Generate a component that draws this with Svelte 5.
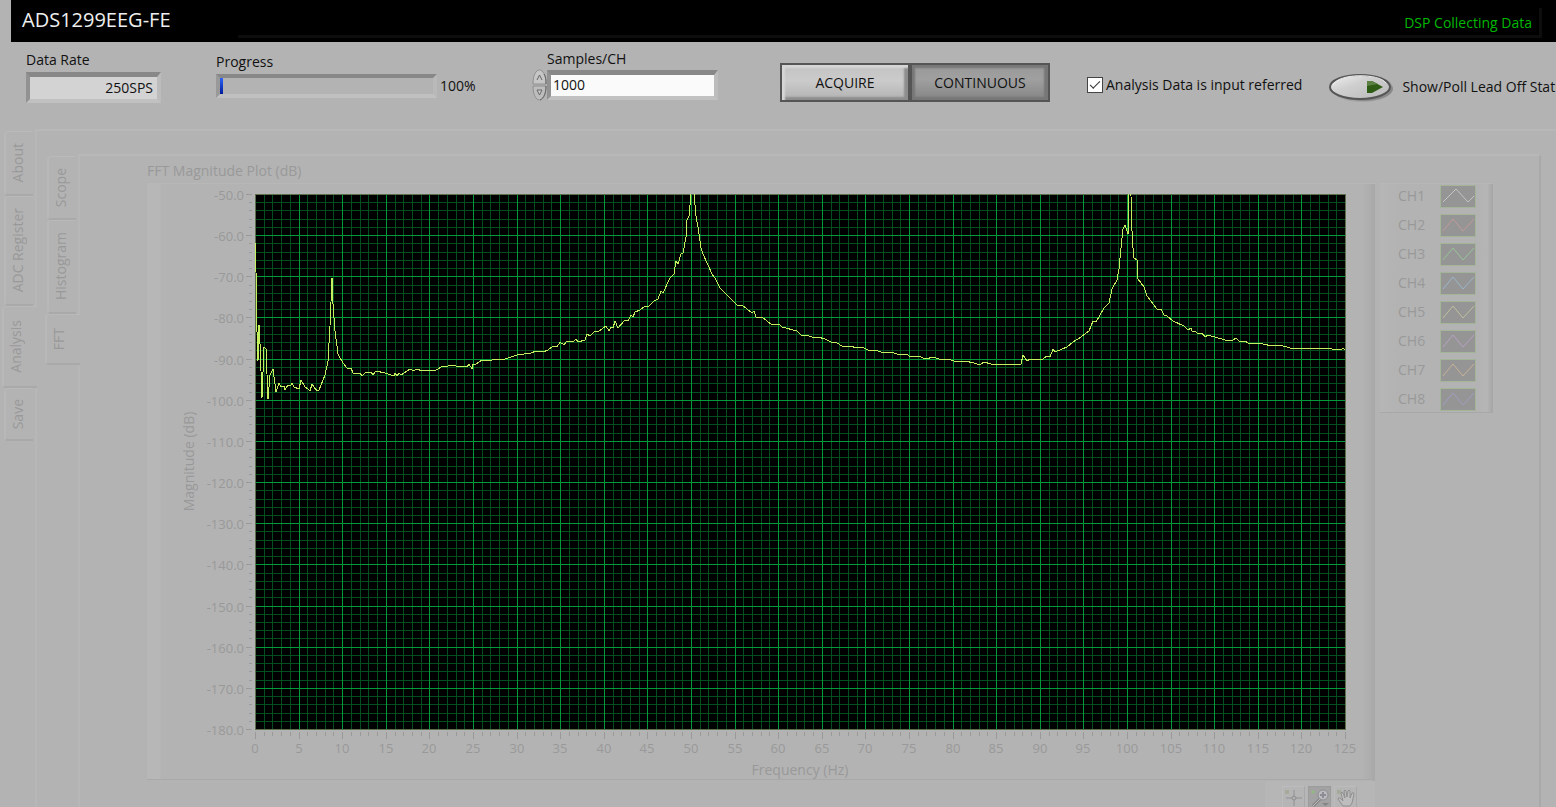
<script>
    const outerTabs = [
        { name: 'About', height: 65 },
        { name: 'ADC Register', height: 110 },
        { name: 'Analysis', height: 82, selected: true },
        { name: 'Save', height: 53 }
    ];
    const innerTabs = [
        { name: 'Scope', height: 64 },
        { name: 'Histogram', height: 94 },
        { name: 'FFT', height: 51, selected: true }
    ];
    const channels = [
        { name: 'CH1', color: '#c4c4c4' },
        { name: 'CH2', color: '#c49a9a' },
        { name: 'CH3', color: '#98c498' },
        { name: 'CH4', color: '#9bb6ca' },
        { name: 'CH5', color: '#c0c0a0' },
        { name: 'CH6', color: '#b9a0c4' },
        { name: 'CH7', color: '#c8b298' },
        { name: 'CH8', color: '#9e9ec4' }
    ];

    // [Hz, dB]
    const spectrum = [
        [0, -61.8], [0.1, -69], [0.2, -83.5], [0.3, -90.7], [0.42, -81.9], [0.57, -86.4], [0.76, -99.6], [1.03, -87.1],
        [1.3, -87.6], [1.49, -99.9], [1.72, -94.1], [2.03, -92.5], [2.45, -98.1], [2.75, -96], [3.02, -96.8], [3.3, -96.7],
        [3.48, -97.6], [3.82, -96.5], [4.1, -96.5], [4.28, -96], [4.51, -97], [5, -97.4], [5.31, -95.1], [5.73, -96.9],
        [6.1, -97.3], [6.31, -97.9], [6.5, -96.2], [6.8, -97], [7.07, -97.9], [7.38, -97.6], [8, -94.1], [8.37, -90.5],
        [8.56, -82], [8.79, -70.5], [8.98, -76.7], [9.21, -83.2], [9.56, -88.9], [10.13, -91], [10.5, -92.2], [11, -92.3],
        [11.28, -93.5], [12, -93.5], [12.23, -94.3], [12.6, -93.6], [13.3, -93.2], [13.5, -94], [13.9, -93.1], [14.9, -93.6],
        [15.9, -94.3], [16.1, -93.6], [16.3, -94.3], [16.5, -93.6], [16.8, -94], [17.8, -92.6], [18.2, -92.9], [18.5, -92.5],
        [19.3, -92.9], [20.8, -92.8], [21.6, -91.9], [22, -92.1], [22.3, -91.5], [23, -91.9], [23.9, -91.7], [24.3, -92],
        [24.5, -91.4], [24.85, -92.5], [25, -91.4], [25.4, -91.4], [26, -90.4], [26.8, -90.6], [27.5, -90.2], [28.3, -90.3],
        [29, -89.9], [30, -89.1], [30.8, -88.9], [31.6, -88.6], [32.2, -88.1], [33, -88.3], [33.6, -87.8], [34.2, -86.9],
        [34.6, -87.1], [35, -86], [35.4, -86.6], [35.8, -85.6], [36.5, -85.9], [36.8, -85.3], [37, -86], [37.9, -85.5],
        [38.1, -84], [38.4, -84.5], [39, -83.2], [39.3, -83.6], [40.3, -82.1], [40.6, -83.3], [40.8, -82.3], [41.1, -82.6],
        [41.3, -80.8], [41.6, -82.5], [42.4, -80.6], [42.8, -80.8], [43.1, -79.3], [43.3, -79.8], [43.6, -78.7], [44.2, -78.3],
        [44.7, -77.2], [45.1, -77.5], [45.7, -75.9], [46.2, -75.4], [46.6, -73.6], [46.8, -74], [47.6, -70.4], [48, -69.4],
        [48.3, -66.2], [48.5, -67], [48.8, -64.7], [49.1, -64.4], [49.4, -60.5], [49.5, -56.3], [49.8, -55.3], [49.95, -50],
        [50, -46], [50.3, -46], [50.4, -50], [50.6, -55.3], [50.8, -58.1], [51.2, -63], [51.4, -64.6], [52.4, -69.4],
        [52.8, -70.4], [53.3, -72.8], [53.7, -73.5], [54.4, -75.1], [55.3, -76.9], [55.8, -77], [57, -79], [57.2, -78.5],
        [57.5, -80], [58.1, -80], [59.3, -81.8], [60.1, -81.7], [60.4, -82.4], [62.1, -83.2], [62.7, -84.4], [63.3, -84.3],
        [64.1, -85.1], [64.6, -84.8], [65.4, -85.2], [66, -86], [66.8, -86.2], [67.3, -86.9], [68.2, -87], [69, -87.4],
        [69.6, -87.2], [70.3, -87.9], [71.2, -87.8], [72, -88.6], [73, -88.5], [73.8, -89.1], [74.6, -88.9], [75.2, -89.5],
        [76, -89.3], [77, -90], [77.8, -89.7], [78.8, -90.4], [79.6, -90.2], [80.4, -90.8], [81.4, -90.7], [82.4, -91],
        [83.1, -91.5], [83.6, -90.9], [84.4, -91.2], [85.2, -91.6], [85.8, -91.2], [86.6, -91.4], [87.2, -91.2], [87.8, -91.4],
        [88.1, -89.2], [88.5, -90.6], [88.9, -90.2], [90.4, -90], [90.8, -89.4], [91.2, -89.7], [91.5, -87.7], [91.7, -88.3],
        [93.1, -87.2], [93.8, -86], [94.4, -85.2], [95.6, -83.2], [96.1, -80.8], [96.5, -81.1], [97.4, -77.7], [97.9, -76.6],
        [98.3, -73.1], [98.8, -71], [99.05, -68.2], [99.3, -63], [99.5, -58.5], [99.8, -57.5], [100.1, -59.6], [100.15, -46],
        [100.4, -46], [100.5, -50.6], [100.6, -58.9], [100.7, -63], [100.85, -65.5], [101.1, -66], [101.3, -70.6], [102, -72.5],
        [102.3, -74.9], [103.4, -77.9], [103.9, -78], [104.2, -79.5], [104.6, -79.6], [105.3, -80.9], [106.5, -82], [107, -83],
        [107.3, -82.5], [107.5, -83.4], [107.8, -83.2], [108, -83.7], [108.6, -83.8], [109, -84.7], [109.3, -84.3], [111.2, -85.5],
        [112.2, -85.5], [112.5, -85.1], [112.9, -85.8], [113.5, -85.8], [113.9, -86.3], [115.6, -86.4], [116.6, -86.9], [117.5, -86.8],
        [118.7, -87.3], [123.3, -87.4], [123.5, -87.7], [124.6, -87.7], [124.8, -87.3], [125, -87.9]
    ];

    // Plot area inside of the graph svg
    const left = 108;
    const top = 10;
    const plotHeight = 535;
    const maxHz = 125;
    const maxDb = -50;
    const minDb = -180;

    let graphWidth = 1228;
    let sampleCount = '1000';
    let inputReferred = true;

    $: plotWidth = graphWidth - left - 30;
    $: xOf = hz => left + Math.round(hz * plotWidth / maxHz);
    const yOf = db => top + Math.round((maxDb - db) * plotHeight / (maxDb - minDb));

    $: trace = spectrum.map(([hz, db]) => `${xOf(hz)},${yOf(db)}`).join(' ');

    const hzTicks = Array.from({ length: maxHz + 1 }, (_, i) => i);
    const dbTicks = Array.from({ length: 66 }, (_, i) => maxDb - i * 2);

    function step(amount) {
        sampleCount = String(Math.max(0, Number(sampleCount) + amount));
    }
</script>

<div class="front-panel">
    <header class="title-bar">
        <h1>ADS1299EEG-FE</h1>
        <div class="status">DSP Collecting Data</div>
    </header>

    <section class="toolbar">
        <div class="field data-rate">
            <label for="data-rate">Data Rate</label>
            <input class="sunken" id="data-rate" type="text" value="250SPS" readonly />
        </div>
        <div class="field progress">
            <label for="progress">Progress</label>
            <div class="line">
                <progress id="progress" max="100" value="1"></progress>
                <span>100%</span>
            </div>
        </div>
        <div class="field samples">
            <label for="samples">Samples/CH</label>
            <div class="line">
                <div class="spinner">
                    <button aria-label="Increment" on:click={() => step(1)}>
                        <svg width="15" height="16" viewBox="0 0 15 16">
                            <path d="M1 15C1 6 4 1 7.500 1S14 6 14 15Z" fill="#c6c6c6" stroke="#909090" />
                            <path d="M12 5C14 8 14 11 14 15" fill="none" stroke="#666" />
                            <path d="M5 11L7.500 6L10 11" fill="none" stroke="#666" />
                        </svg>
                    </button>
                    <button aria-label="Decrement" on:click={() => step(-1)}>
                        <svg width="15" height="16" viewBox="0 0 15 16">
                            <path d="M1 1C1 10 4 15 7.500 15S14 10 14 1Z" fill="#bdbdbd" stroke="#909090" />
                            <path d="M14 1C14 8 12 13 8 15" fill="none" stroke="#666" />
                            <path d="M5 5H10L7.500 10Z" fill="#ccc" stroke="#666" />
                        </svg>
                    </button>
                </div>
                <input class="sunken" id="samples" type="text" bind:value={sampleCount} />
            </div>
        </div>
        <div class="modes">
            <button class="mode">ACQUIRE</button>
            <button class="mode pressed">CONTINUOUS</button>
        </div>
        <label class="referred">
            <input type="checkbox" bind:checked={inputReferred} />
            Analysis Data is input referred
        </label>
        <div class="lead-off">
            <button id="lead-off" aria-label="Show/Poll Lead Off Status">
                <svg width="66" height="32" viewBox="0 0 66 32">
                    <defs>
                        <linearGradient id="oval" x1="0" y1="0" x2="1" y2="1">
                            <stop offset="0" stop-color="#f2f2f2" />
                            <stop offset="0.4" stop-color="#cfcfcf" />
                            <stop offset="1" stop-color="#b8b8b8" />
                        </linearGradient>
                    </defs>
                    <ellipse cx="33" cy="17" rx="31" ry="14" fill="#a5a5a5" />
                    <ellipse cx="35" cy="18" rx="29" ry="12" fill="#8a8a8a" />
                    <ellipse cx="31" cy="16" rx="30" ry="12" fill="url(#oval)" stroke="#555" stroke-width="2" />
                    <path d="M4 14C9 2 50 2 57 12" fill="none" stroke="#f0f0f0" />
                    <path d="M38 10H43L54 16L43 22H38Z" fill="#2f5c14" />
                    <path d="M38 10H43L49 13L38 15Z" fill="#5a8044" />
                </svg>
            </button>
            <label for="lead-off">Show/Poll Lead Off Status</label>
        </div>
    </section>

    <main class="tab-control outer">
        <div class="tabs">
            {#each outerTabs as tab}
                <button class="tab" class:selected={tab.selected} style="height: {tab.height}px" disabled>
                    <span>{tab.name}</span>
                </button>
            {/each}
        </div>
        <div class="page">
            <div class="tab-control inner">
                <div class="tabs">
                    {#each innerTabs as tab}
                        <button class="tab" class:selected={tab.selected} style="height: {tab.height}px" disabled>
                            <span>{tab.name}</span>
                        </button>
                    {/each}
                </div>
                <div class="page fft">
                    <h2>FFT Magnitude Plot (dB)</h2>
                    <div class="plot-row">
                        <div class="plot-column">
                            <div class="graph" bind:clientWidth={graphWidth}>
                                <svg width={graphWidth} height="595">
                                    <defs>
                                        <clipPath id="plot-area">
                                            <rect x={left} y={top} width={plotWidth + 1} height={plotHeight + 1} />
                                        </clipPath>
                                    </defs>
                                    <rect x={left} y={top} width={plotWidth + 1} height={plotHeight + 1} />
                                    <g class="grid">
                                        {#each hzTicks.filter(hz => hz % 5) as hz}
                                            <path class="minor" d="M{xOf(hz)} {top}v{plotHeight}" />
                                        {/each}
                                        {#each dbTicks.filter(db => db % 10) as db}
                                            <path class="minor" d="M{left} {yOf(db)}h{plotWidth}" />
                                        {/each}
                                        {#each hzTicks.filter(hz => hz % 5 === 0 && hz > 0 && hz < maxHz) as hz}
                                            <path class="major" d="M{xOf(hz)} {top}v{plotHeight}" />
                                        {/each}
                                        {#each dbTicks.filter(db => db % 10 === 0 && db < maxDb && db > minDb) as db}
                                            <path class="major" d="M{left} {yOf(db)}h{plotWidth}" />
                                        {/each}
                                    </g>
                                    <rect class="frame" x={left} y={top} width={plotWidth} height={plotHeight} />
                                    <polyline class="trace" points={trace} clip-path="url(#plot-area)" />

                                    <g class="scale">
                                        {#each dbTicks as db}
                                            <path d="M{left - 3} {yOf(db)}h{db % 10 ? -3 : -6}" />
                                            {#if db % 10 === 0}
                                                <text x={left - 11} y={yOf(db) + 6} text-anchor="end">{db.toFixed(1)}</text>
                                            {/if}
                                        {/each}
                                        {#each hzTicks as hz}
                                            <path d="M{xOf(hz)} {top + plotHeight + 3}v{hz % 5 ? 4 : 7}" />
                                            {#if hz % 5 === 0}
                                                <text x={xOf(hz)} y={top + plotHeight + 24} text-anchor="middle">{hz}</text>
                                            {/if}
                                        {/each}
                                        <text class="caption" x={left + plotWidth / 2} y={top + plotHeight + 46} text-anchor="middle">Frequency (Hz)</text>
                                        <text class="caption" transform="translate(47 {top + plotHeight / 2}) rotate(-90)" text-anchor="middle">Magnitude (dB)</text>
                                    </g>
                                </svg>
                            </div>
                            <div class="palette">
                                <button aria-label="Cursor" disabled>
                                    <svg width="22" height="22" viewBox="0 0 22 22">
                                        <path d="M2 3h4v4h-4z" fill="#a5ab9a" />
                                        <path d="M11 3V19M3 11H19" stroke="#909090" />
                                        <circle cx="11" cy="11" r="2" fill="#b0b0b0" stroke="#909090" />
                                    </svg>
                                </button>
                                <button class="active" aria-label="Zoom" disabled>
                                    <svg width="22" height="22" viewBox="0 0 22 22">
                                        <path d="M2 5h4M4 3v4" stroke="#8dbf7d" />
                                        <path d="M11 12L4 19" stroke="#858585" stroke-width="3" />
                                        <path d="M11 12L4 19" stroke="#bbb" />
                                        <circle cx="14" cy="8" r="5" fill="#bcbcc0" stroke="#8c8c94" />
                                        <path d="M11 8H17M14 5V11" stroke="#8c8c94" stroke-width="2" />
                                        <path d="M13 16H20L16.500 19Z" fill="#858585" />
                                    </svg>
                                </button>
                                <button aria-label="Pan" disabled>
                                    <svg width="22" height="22" viewBox="0 0 22 22">
                                        <path d="M2 3h4v4h-4z" fill="#a5ab9a" />
                                        <path d="M8 19L3 12Q3 10 5 11L8 14L6 6Q7 4 8 6L10 11L9 4Q10 2 11 4L12 10L13 4Q14 2 15 4L15 11L17 6Q19 5 19 7L17 16L15 19Z" fill="#bdbdbd" stroke="#909090" />
                                    </svg>
                                </button>
                            </div>
                        </div>
                        <ul class="legend">
                            {#each channels as channel, i}
                                <li>
                                    <span>{channel.name}</span>
                                    <svg width="36" height="23" viewBox="0 0 36 23">
                                        <rect x="0.500" y="0.500" width="35" height="22" fill="#959595" stroke="#a4b498" />
                                        <polyline
                                            points={i === 0 ? '3,17 16,4 28,17 34,11' : '3,17 13,5 23,17 34,5'}
                                            fill="none"
                                            stroke={channel.color}
                                        />
                                    </svg>
                                </li>
                            {/each}
                        </ul>
                    </div>
                </div>
            </div>
        </div>
    </main>
</div>

<style>
    :global(body) {
        background-color: #b3b3b3;
    }
    .front-panel {
        height: 100vh;
        overflow: hidden;
        font-family: "Open Sans", "Noto Sans", sans-serif;
        font-size: 14px;
        line-height: 20px;
        color: #111;
        background-color: #b3b3b3;
    }
    button, input {
        box-sizing: border-box;
        margin: 0;
        padding: 0;
        font: inherit;
        color: inherit;
    }
    svg {
        display: block;
    }

    .title-bar {
        display: flex;
        box-sizing: border-box;
        height: 42px;
        margin-left: 11px;
        padding: 8px 14px 4px 11px;
        background-color: #000;
    }
    h1 {
        width: 216px;
        margin: 0;
        font-size: 20px;
        font-weight: 400;
        line-height: 24px;
        color: #eee;
    }
    .status {
        flex: 1;
        padding: 5px 7px 0 0;
        text-align: right;
        color: #00b800;
        border-right: 3px solid #0d0d0d;
        border-bottom: 3px solid #0d0d0d;
    }

    .toolbar {
        display: flex;
        height: 87px;
        padding-left: 26px;
        white-space: nowrap;
    }
    .toolbar > * {
        flex-shrink: 0;
    }
    .field {
        display: flex;
        flex-direction: column;
        gap: 2px;
    }
    .line {
        display: flex;
        align-items: center;
    }
    .sunken {
        height: 31px;
        border: 4px solid;
        border-top-width: 5px;
        border-color: #888 #bcbcbc #c1c1c1 #929292;
        border-radius: 0;
        outline: none;
    }
    .data-rate {
        width: 135px;
        padding-top: 8px;
    }
    .data-rate .sunken {
        width: 100%;
        padding: 0 4px 2px 0;
        text-align: right;
        background-color: #d3d3d3;
    }
    .progress {
        width: 264px;
        margin-left: 55px;
        padding-top: 10px;
    }
    .progress .line {
        gap: 3px;
    }
    progress {
        box-sizing: border-box;
        width: 221px;
        height: 24px;
        border: 4px solid;
        border-color: #888 #b9b9b9 #c0c0c0 #999;
        background-color: #b3b3b3;
        appearance: none;
    }
    progress::-webkit-progress-bar {
        background-color: #b3b3b3;
    }
    progress::-webkit-progress-value {
        min-width: 3px;
        background: linear-gradient(#2c62f5, #001c9c);
    }
    .samples {
        width: 186px;
        margin-left: 52px;
        padding-top: 7px;
        gap: 0;
    }
    .samples label {
        margin-left: 15px;
    }
    .samples .sunken {
        width: 171px;
        height: 30px;
        padding: 0 0 2px 2px;
        background-color: #fafafa;
    }
    .spinner button {
        display: block;
        width: 15px;
        height: 16px;
        border: 0;
        background: none;
    }
    .modes {
        display: flex;
        height: 39px;
        margin: 21px 0 0 62px;
    }
    .mode {
        width: 130px;
        border: 2px solid #555;
        background: linear-gradient(#c2c2c2, #cbcbcb 45%, #b2b2b2);
        box-shadow: inset 3px 3px 2px #d6d6d6, inset -4px -3px 2px #8d8d8d;
    }
    .mode.pressed {
        width: 140px;
        background: linear-gradient(#999, #a0a0a0 40%, #858585);
        box-shadow: inset 3px 3px 2px #777, inset -4px -3px 2px #777;
    }
    .referred {
        display: flex;
        align-items: center;
        gap: 3px;
        height: 20px;
        margin: 33px 0 0 37px;
    }
    .referred input {
        width: 16px;
        height: 16px;
        border: 1px solid #444;
        background-color: #fff;
        appearance: none;
    }
    .referred input:checked::after {
        content: '';
        display: block;
        width: 9px;
        height: 4px;
        margin: 3px 2px;
        border-left: 1px solid #333;
        border-bottom: 1px solid #333;
        transform: rotate(-45deg);
    }
    .lead-off {
        display: flex;
        align-items: center;
        gap: 7px;
        height: 32px;
        margin: 29px 0 0 27px;
    }
    .lead-off button {
        border: 0;
        background: none;
    }

    .tab-control {
        display: flex;
    }
    .tabs {
        display: flex;
        flex-direction: column;
        flex-shrink: 0;
        align-items: flex-end;
        width: 35px;
        padding-top: 2px;
    }
    .outer > .tabs {
        width: 37px;
    }
    .tab {
        display: flex;
        align-items: center;
        justify-content: center;
        width: 29px;
        margin-right: 4px;
        padding-right: 3px;
        border: 1px solid;
        border-width: 1px 0 2px 2px;
        border-color: #b9b9b9 #b3b3b3 #a9a9a9 #b8b8b8;
        border-radius: 4px 0 0 4px;
        color: #999;
        background-color: #b3b3b3;
    }
    .tab.selected {
        width: 35px;
        margin-right: 0;
        padding-right: 9px;
        z-index: 1;
    }
    .tab span {
        writing-mode: vertical-rl;
        transform: rotate(180deg);
    }
    .page {
        flex: 1;
        min-width: 0;
        margin-left: -2px;
        border-top: 2px solid #b8b8b8;
        border-left: 2px solid #b7b7b7;
    }
    .inner {
        margin: 23px 15px 0 8px;
    }
    .inner .page {
        border-right: 2px solid #a9a9a9;
    }
    .fft {
        padding: 5px 46px 0 67px;
        color: #999;
    }
    h2 {
        margin: 0;
        font-size: 14px;
        font-weight: 400;
        line-height: 20px;
    }
    .plot-row {
        display: flex;
        align-items: flex-start;
        gap: 5px;
        padding-top: 2px;
    }
    .plot-column {
        flex: 1;
        min-width: 0;
        box-shadow: inset -1px 0 #a5a5a5, inset -3px 0 #adadad;
    }
    .graph {
        overflow: hidden;
        border-top: 1px solid #b8b8b8;
        border-bottom: 1px solid #a9a9a9;
        background: linear-gradient(90deg, #b7b7b7 13px, transparent 14px, transparent calc(100% - 13px), #a9a9a9);
    }
    .grid path {
        stroke-width: 1px;
        shape-rendering: crispEdges;
    }
    .grid .minor {
        stroke: #00501f;
    }
    .grid .major {
        stroke: #009a3a;
    }
    .frame {
        fill: none;
        stroke: #5c7050;
        shape-rendering: crispEdges;
    }
    .trace {
        fill: none;
        stroke: #c4f060;
        stroke-width: 1px;
        shape-rendering: crispEdges;
    }
    .scale path {
        stroke: #999;
        stroke-width: 1px;
        shape-rendering: crispEdges;
    }
    .scale text {
        font-size: 13px;
        fill: #999;
    }
    .scale .caption {
        font-size: 14px;
    }
    .palette {
        display: flex;
        justify-content: flex-end;
        gap: 3px;
        width: 74px;
        margin: 1px 0 0 auto;
        padding: 5px 18px 8px;
        background-color: #b6b6b6;
    }
    .palette button {
        width: 23px;
        height: 24px;
        border: 1px solid;
        border-color: #bcbcbc #a8a8a8 #a8a8a8 #bcbcbc;
        background-color: #b5b5b5;
    }
    .palette .active {
        border-color: #9c9c9c;
        background-color: #a2a2a2;
    }
    .legend {
        box-sizing: border-box;
        width: 113px;
        margin: 0;
        padding: 1px 17px 1px 18px;
        list-style: none;
        border-top: 1px solid #b8b8b8;
        border-bottom: 1px solid #a8a8a8;
        background: linear-gradient(90deg, #b6b6b6, #b3b3b3 17px, #b3b3b3 calc(100% - 16px), #b5b5b5 calc(100% - 6px), #a5a5a5);
    }
    .legend li {
        display: flex;
        align-items: center;
        justify-content: space-between;
        height: 23px;
        margin-bottom: 6px;
    }
    .legend li span {
        padding-bottom: 1px;
    }
    .legend li:last-child {
        margin-bottom: 0;
    }
</style>
